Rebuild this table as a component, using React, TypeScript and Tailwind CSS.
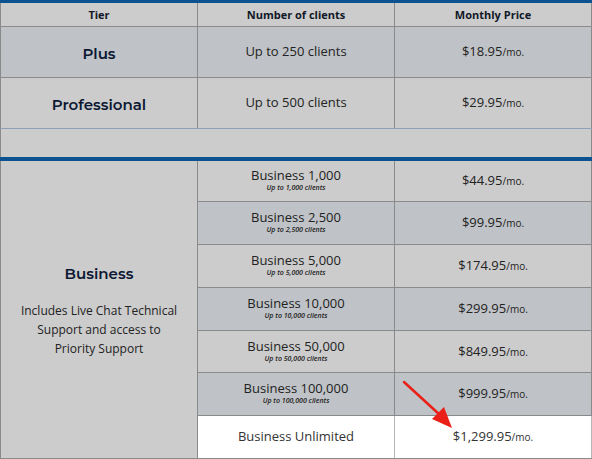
const tiers = [
  { name: "Plus", clients: "Up to 250 clients", price: "$18.95", bg: "bg-[#bfc2c6]" },
  { name: "Professional", clients: "Up to 500 clients", price: "$29.95", bg: "bg-[#cccccc]" },
];

const business = [
  { name: "Business 1,000", sub: "Up to 1,000 clients", price: "$44.95", bg: "bg-[#cccccc]", h: "h-[41px]" },
  { name: "Business 2,500", sub: "Up to 2,500 clients", price: "$99.95", bg: "bg-[#bfc2c6]", h: "h-[43px]" },
  { name: "Business 5,000", sub: "Up to 5,000 clients", price: "$174.95", bg: "bg-[#cccccc]", h: "h-[43px]" },
  { name: "Business 10,000", sub: "Up to 10,000 clients", price: "$299.95", bg: "bg-[#bfc2c6]", h: "h-[43px]" },
  { name: "Business 50,000", sub: "Up to 50,000 clients", price: "$849.95", bg: "bg-[#cccccc]", h: "h-[42px]" },
  { name: "Business 100,000", sub: "Up to 100,000 clients", price: "$999.95", bg: "bg-[#bfc2c6]", h: "h-[43px]" },
];

const sans = "font-['Open_Sans',sans-serif]";
const title = "font-['Montserrat','Inter',sans-serif] font-semibold text-[15px] text-[#0b1733]";

function Price({ value }: { value: string }) {
  return (
    <span className="text-[13px] text-[#222]">
      {value}
      <span className="text-[10px]">/mo.</span>
    </span>
  );
}

function RedArrow() {
  return (
    <svg className="pointer-events-none absolute left-[400px] top-[378px]" width="60" height="56" viewBox="0 0 60 56">
      <path d="M4 4 L40 37" stroke="#ea1f17" strokeWidth={2.5} strokeLinecap="round" />
      <path d="M52 50 L32 41 L44 29 Z" fill="#ea1f17" />
    </svg>
  );
}

export default function App() {
  return (
    <div className={`relative h-[459px] w-[592px] bg-white ${sans}`}>
      <div className="h-[3px] bg-[#0c5290]" />
      <div className="grid grid-cols-[197px_197px_197px] border-l border-[#8a8a8a] bg-[#cccccc]">
        {["Tier", "Number of clients", "Monthly Price"].map((h) => (
          <div
            key={h}
            className="flex h-[24px] items-center justify-center border-b border-r border-[#8a8a8a] pt-px text-[11px] font-bold text-[#111827]"
          >
            {h}
          </div>
        ))}
      </div>
      {tiers.map((t, i) => (
        <div
          key={t.name}
          className={`grid h-[51px] grid-cols-[197px_197px_197px] border-b border-l ${
            i === 1 ? "border-b-[#8fa1b8]" : "border-b-[#8a8a8a]"
          } border-l-[#8a8a8a] ${t.bg}`}
        >
          <div className={`flex items-center justify-center border-r border-[#8a8a8a] pt-1 ${title}`}>{t.name}</div>
          <div className="flex items-center justify-center border-r border-[#8a8a8a] text-[13px] text-[#222]">
            {t.clients}
          </div>
          <div className="flex items-center justify-center border-r border-[#8a8a8a]">
            <Price value={t.price} />
          </div>
        </div>
      ))}
      <div className="h-[28px] border-x border-[#8a8a8a] bg-[#cccccc]" />
      <div className="h-[4px] bg-[#0c5290]" />
      <div className="flex h-[298px] border-l border-b border-[#8a8a8a]">
        <div className="flex w-[197px] flex-col items-center justify-center gap-[15px] border-r border-[#8a8a8a] bg-[#cccccc] pt-[2px] text-center">
          <div className={title}>Business</div>
          <p className="w-[164px] text-[12px] leading-[19px] text-[#222]">
            Includes Live Chat Technical Support and access to Priority Support
          </p>
        </div>
        <div className="flex flex-1 flex-col">
          {business.map((b) => (
            <div key={b.name} className={`grid ${b.h} grid-cols-[197px_197px] border-b border-[#8a8a8a] ${b.bg}`}>
              <div className="flex flex-col items-center justify-center border-r border-[#8a8a8a] pb-[3px]">
                <span className="text-[13px] leading-[16px] text-[#222]">{b.name}</span>
                <span className="text-[7px] font-semibold italic leading-[9px] text-[#222]">{b.sub}</span>
              </div>
              <div className="flex items-center justify-center border-r border-[#8a8a8a]">
                <Price value={b.price} />
              </div>
            </div>
          ))}
          <div className="grid flex-1 grid-cols-[197px_197px] bg-white">
            <div className="flex items-center justify-center border-r border-[#b5b5b5] text-[13px] text-[#333]">
              Business Unlimited
            </div>
            <div className="flex items-center justify-center border-r border-[#b5b5b5]">
              <span className="text-[13px] text-[#333]">
                $1,299.95<span className="text-[10px]">/mo.</span>
              </span>
            </div>
          </div>
        </div>
      </div>
      <RedArrow />
    </div>
  );
}
